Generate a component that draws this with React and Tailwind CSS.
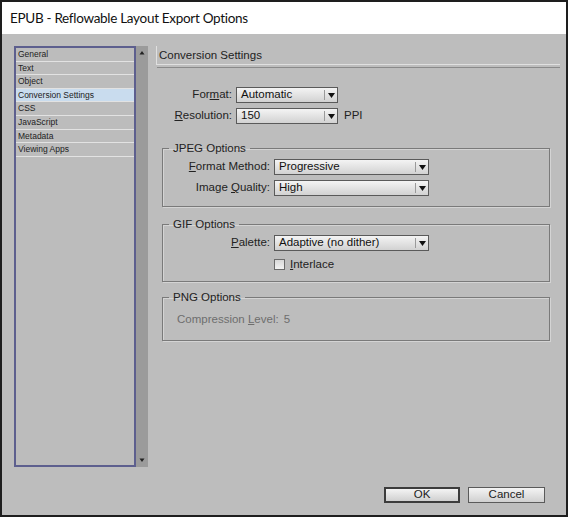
import React from "react";

const sideItems = [
	"General",
	"Text",
	"Object",
	"Conversion Settings",
	"CSS",
	"JavaScript",
	"Metadata",
	"Viewing Apps",
];

// dropdown box with the little black arrow
const Select = ({ value, width }) => (
	<div
		className="flex h-[16px] items-center border border-[#5a5a5a] bg-gradient-to-b from-[#f4f4f4] to-[#d2d2d2] text-[11.5px] text-[#111]"
		style={{ width }}
	>
		<span className="flex-1 truncate pl-[4px] leading-none">{value}</span>
		<span className="h-[10px] w-px bg-[#9a9a9a]" />
		<span className="flex w-[12px] justify-center">
			<svg width="7" height="5" viewBox="0 0 7 5">
				<path d="M0 0h7L3.5 5z" fill="#111" />
			</svg>
		</span>
	</div>
);

const Group = ({ title, className, children }) => (
	<fieldset
		className={`ml-[6px] w-[388px] border border-[#7a7a7a] shadow-[inset_1px_1px_0_#d4d4d4,1px_1px_0_#d4d4d4] ${className}`}
	>
		<legend className="ml-[6px] px-[4px] text-[11.5px] leading-[14px] text-[#222]">
			{title}
		</legend>
		{children}
	</fieldset>
);

const Label = ({ children, width }) => (
	<div className="whitespace-nowrap text-right text-[11.5px] leading-none text-[#222]" style={{ width }}>
		{children}
	</div>
);

export default function App() {
	return (
		<div
			className="h-[518px] w-[570px] bg-white"
			style={{ fontFamily: '"Liberation Sans", Arial, sans-serif' }}
		>
			<div className="flex h-[517px] w-[568px] flex-col border-2 border-[#1e1e1e] bg-[#bdbdbd]">
				{/* Title bar */}
				<div
					className="flex h-[32px] items-center bg-white pl-[8px] text-[13.5px] tracking-[-0.3px] text-[#111]"
					style={{ fontFamily: 'Lato, "Noto Sans", sans-serif' }}
				>
					EPUB - Reflowable Layout Export Options
				</div>

				<div className="flex pl-[12px] pt-[12px]">
					{/* Category list */}
					<div className="flex h-[421px]">
						<div className="flex w-[122px] flex-col border-2 border-[#5d5f8e] bg-[#bcbcbc]">
							{sideItems.map((item) => (
								<div
									key={item}
									className={`h-[13.6px] border-b border-[#e2e2e2] pl-[2px] text-[8.5px] leading-[13px] text-[#222] ${
										item === "Conversion Settings" ? "bg-[#c9dcee]" : ""
									}`}
								>
									{item}
								</div>
							))}
						</div>
						<div className="flex w-[12px] flex-col justify-between bg-[#9b9b9b] py-[4px]">
							<svg width="12" height="5" viewBox="0 0 12 5">
								<path d="M3.5 4.5h5L6 1z" fill="#222" />
							</svg>
							<svg width="12" height="5" viewBox="0 0 12 5">
								<path d="M3.5 0.5h5L6 4z" fill="#222" />
							</svg>
						</div>
					</div>

					{/* Settings panel */}
					<div className="ml-[8px] flex w-[404px] flex-col">
						<div className="h-[19px] border-b border-l border-[#e0e0e0] pl-[2px] pt-[4px] text-[11.5px] leading-none text-[#222]">
							<div className="-ml-[2px] border-b border-[#8a8a8a] pb-[5px] pl-[2px]">
								Conversion Settings
							</div>
						</div>

						<div className="mt-[22px] flex flex-col gap-[5px]">
							<div className="flex items-center gap-[4px]">
								<Label width={76}>
									For<u>m</u>at:
								</Label>
								<Select value="Automatic" width={102} />
							</div>
							<div className="flex items-center gap-[4px]">
								<Label width={76}>
									<u>R</u>esolution:
								</Label>
								<Select value="150" width={102} />
								<span className="ml-[2px] text-[11.5px] leading-none text-[#222]">PPI</span>
							</div>
						</div>

						<Group title="JPEG Options" className="mt-[17px] h-[66px]">
							<div className="flex flex-col gap-[5px] pt-[4px]">
								<div className="flex items-center gap-[4px]">
									<Label width={107}>
										<u>F</u>ormat Method:
									</Label>
									<Select value="Progressive" width={155} />
								</div>
								<div className="flex items-center gap-[4px]">
									<Label width={107}>
										Image <u>Q</u>uality:
									</Label>
									<Select value="High" width={155} />
								</div>
							</div>
						</Group>

						<Group title="GIF Options" className="mt-[10px] h-[65px]">
							<div className="flex flex-col gap-[8px] pt-[4px]">
								<div className="flex items-center gap-[4px]">
									<Label width={107}>
										<u>P</u>alette:
									</Label>
									<Select value="Adaptive (no dither)" width={155} />
								</div>
								<div className="flex items-center gap-[5px] pl-[111px]">
									<span className="h-[11px] w-[11px] border border-[#6a6a6a] bg-gradient-to-b from-[#d8d8d8] to-[#f2f2f2]" />
									<span className="text-[11.5px] leading-none text-[#222]">
										<u>I</u>nterlace
									</span>
								</div>
							</div>
						</Group>

						<Group title="PNG Options" className="mt-[8px] h-[51px]">
							<div className="flex items-center gap-[5px] whitespace-nowrap pl-[14px] pt-[10px] text-[11.5px] leading-none text-[#6e6e6e]">
								<span className="shrink-0">
									Compression <u>L</u>evel:
								</span>
								<span>5</span>
							</div>
						</Group>
					</div>
				</div>

				{/* Buttons */}
				<div className="mt-[20px] flex justify-end gap-[8px] pr-[21px]">
					<button className="h-[16px] w-[76px] border-2 border-[#3c3c3c] bg-gradient-to-b from-[#f4f4f4] to-[#d0d0d0] text-[11.5px] leading-none text-[#222]">
						OK
					</button>
					<button className="h-[16px] w-[77px] border border-[#5a5a5a] bg-gradient-to-b from-[#f4f4f4] to-[#d0d0d0] text-[11.5px] leading-none text-[#222]">
						Cancel
					</button>
				</div>
			</div>
		</div>
	);
}
